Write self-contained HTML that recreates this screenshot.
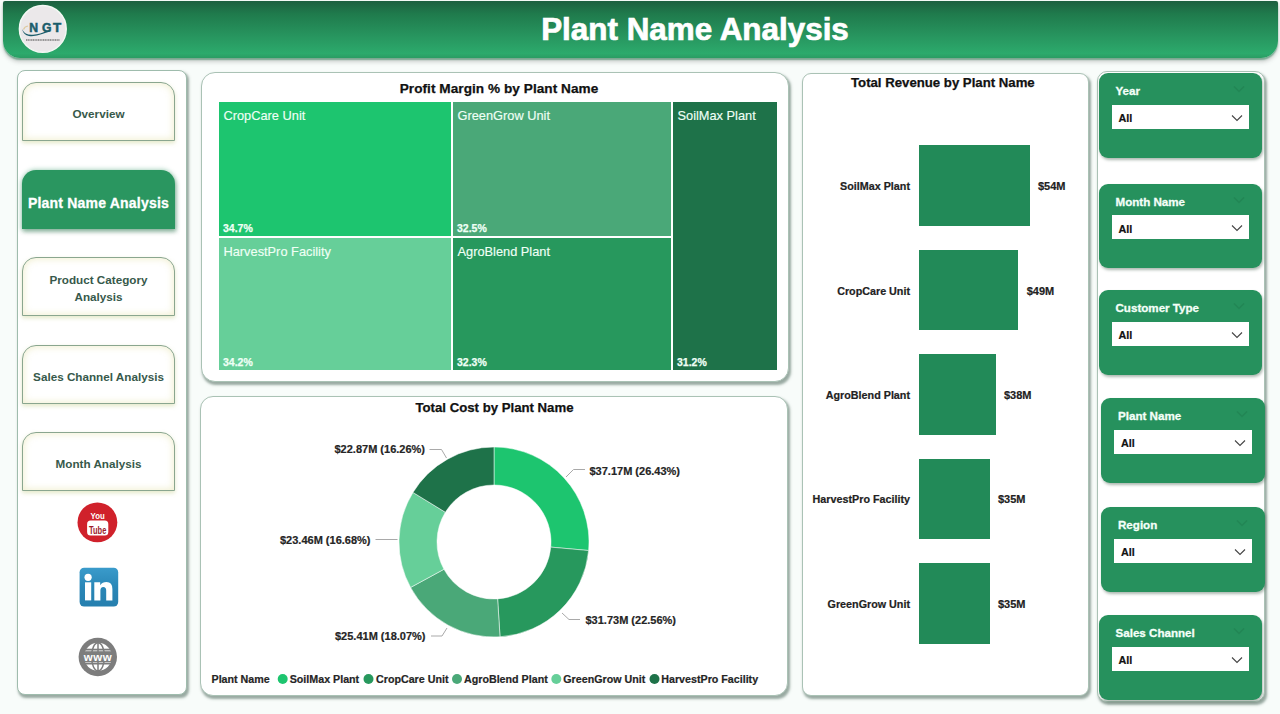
<!DOCTYPE html>
<html><head><meta charset="utf-8">
<style>
*{box-sizing:border-box;margin:0;padding:0}
html,body{width:1280px;height:714px;overflow:hidden;background:#f8fcfa;font-family:"Liberation Sans",sans-serif;position:relative}
.abs{position:absolute}
#hdr{left:3px;top:1px;width:1275px;height:57px;background:linear-gradient(#1c5f40 0%,#1f7a4c 22%,#27945e 60%,#2caa6c 92%,#2a9c63 100%);border-radius:2px 2px 17px 17px;box-shadow:0 1.5px 1.5px rgba(50,130,90,.55),0 4px 4px rgba(100,100,100,.28)}
#title{left:395px;top:11.7px;width:600px;text-align:center;color:#fff;-webkit-text-stroke:.7px #fff;font-weight:bold;font-size:31.4px;line-height:36px}
#logo{left:19px;top:5px;width:48px;height:48px;border-radius:50%;background:#efeeee}
.panel{background:#fff;border:1.2px solid #aac2b5;border-radius:12px;box-shadow:1.5px 2.5px 2.5px rgba(60,90,75,.5)}
#nav{left:17px;top:70px;width:170px;height:625px;border-radius:8px;border:1.3px solid #9fbcad}
.btn{left:22px;width:153px;height:59px;border:1.3px solid #8aa68f;border-radius:14px 14px 0 0;background:#fff;box-shadow:0 2px 4px rgba(215,222,175,.7), inset 0 0 7px 1px rgba(238,236,200,.85);color:#37594b;font-weight:bold;font-size:11.7px;text-align:center;display:flex;align-items:center;justify-content:center;line-height:16.8px;padding-top:5px}
.btn.act{background:#2a9660;border:none;color:#fff;-webkit-text-stroke:.3px #fff;font-size:14px;letter-spacing:.2px;padding-top:8px;box-shadow:0 0 4px 1px rgba(42,150,96,.35),1px 3px 4px rgba(60,110,80,.45)}
#tm{left:201px;top:72px;width:588px;height:310px;border-radius:14px}
#dn{left:199.5px;top:396px;width:588.5px;height:300px;border-radius:13px}
#rv{left:802px;top:73px;width:286.5px;height:622.5px;border-radius:9px}
#sl{left:1097px;top:71px;width:168px;height:631px;border-radius:10px}
.ptitle{-webkit-text-stroke-width:.25px;position:absolute;left:0;right:0;text-align:center;font-weight:bold;font-size:13.6px;color:#111}
.cell{position:absolute;color:#effff5}
.cell .n{-webkit-text-stroke-width:.15px;position:absolute;left:4.5px;top:6.3px;font-size:12.8px;white-space:nowrap}
.cell .v{-webkit-text-stroke-width:.25px;position:absolute;left:4px;bottom:2px;font-size:10.5px;font-weight:bold}
.bar{position:absolute;left:919px;height:80.8px;background:#228a58}
.bl{-webkit-text-stroke-width:.2px;position:absolute;right:370px;font-size:10.75px;font-weight:bold;color:#222;text-align:right;width:120px}
.bv{-webkit-text-stroke-width:.2px;position:absolute;font-size:11px;font-weight:bold;color:#222}
.card{position:absolute;width:163.5px;height:84.5px;background:#26915d;border-radius:9px;box-shadow:1px 2px 3px rgba(50,80,60,.4)}
.card .t{-webkit-text-stroke:.3px #f4fff8;position:absolute;left:17px;top:11px;color:#f4fff8;font-weight:bold;font-size:11.6px;white-space:nowrap}
.card .dd{position:absolute;left:13px;top:31.6px;width:137.5px;height:24px;background:#fff}
.card .dd span{-webkit-text-stroke-width:.2px;position:absolute;left:7px;top:7.5px;font-size:10.8px;font-weight:bold;color:#111}
.card .hc{position:absolute;right:17px;top:12px;opacity:.5}
.card .dd svg{position:absolute;right:6px;top:9px}
.lbl{-webkit-text-stroke-width:.2px;position:absolute;font-size:11px;font-weight:bold;color:#252525;white-space:nowrap}
</style></head><body>
<div id="hdr" class="abs"></div>
<svg class="abs" style="left:0;top:0" width="90" height="60" viewBox="0 0 90 60">
<circle cx="42.8" cy="28.9" r="23.4" fill="#ebe8ea" stroke="#f3f8f4" stroke-width="1.5"/>
<g font-family="Liberation Sans" font-weight="bold" font-size="12.2" fill="#1a5c6a" stroke="#1a5c6a" stroke-width=".5">
<text x="29.3" y="31.6">N</text><text x="41.9" y="31.6">G</text><text x="52.9" y="31.6" transform="translate(52.9 0) scale(1.1 1) translate(-52.9 0)">T</text>
</g>
<path d="M22 29 Q25 35.5 33 34.8 Q41 34 45.5 31.2 Q49 30.8 51.5 31.6 Q47 32.2 43 33.8 Q35 36.8 29 36 Q23.5 35 22 29Z" fill="#1a5c6a"/>
<path d="M23.5 29.5 Q24.5 26.5 28 26" stroke="#d9c08a" stroke-width="1.2" fill="none" opacity=".8"/>
<line x1="26" y1="40" x2="60" y2="40" stroke="#333" stroke-width="1.4" stroke-dasharray="1.2 .5" opacity=".6"/>
</svg>
<div id="title" class="abs">Plant Name Analysis</div>

<div id="nav" class="abs panel"></div>
<div class="abs btn" style="top:82px">Overview</div>
<div class="abs btn act" style="top:170px">Plant Name Analysis</div>
<div class="abs btn" style="top:257px">Product Category<br>Analysis</div>
<div class="abs btn" style="top:345px">Sales Channel Analysis</div>
<div class="abs btn" style="top:432px">Month Analysis</div>
<svg class="abs" style="left:0;top:480px" width="200" height="220" viewBox="0 480 200 220">
<circle cx="97.4" cy="522.4" r="19.9" fill="#d0212b"/>
<text x="97.6" y="518.9" text-anchor="middle" font-family="Liberation Sans" font-weight="bold" font-size="11.5" fill="#fff" transform="translate(97.6 518.9) scale(.68 .85) translate(-97.6 -518.9)">You</text>
<rect x="87.1" y="520.4" width="21.2" height="15" rx="3.5" fill="#fff"/>
<text x="97.7" y="533.6" text-anchor="middle" font-family="Liberation Sans" font-weight="bold" font-size="12.5" fill="#9c1b2a" transform="translate(97.7 533.6) scale(.6 .9) translate(-97.7 -533.6)">Tube</text>
<defs><linearGradient id="lg" x1="0" y1="0" x2="0" y2="1"><stop offset="0" stop-color="#3a9bcb"/><stop offset=".5" stop-color="#2a87b7"/><stop offset="1" stop-color="#267fae"/></linearGradient></defs>
<rect x="79.6" y="567.7" width="38.6" height="38.9" rx="4.5" fill="url(#lg)"/>
<circle cx="88.1" cy="577.3" r="3.6" fill="#fff"/>
<rect x="85" y="582.3" width="6.2" height="18.1" fill="#fff"/>
<path d="M94.3 582.3H100.2V585.2Q102.3 582 106.5 582Q112.4 582 112.4 589V600.4H106.2V590.5Q106.2 587 103.3 587Q100.4 587 100.4 590.5V600.4H94.3Z" fill="#fff"/>
<circle cx="97.8" cy="657" r="19.2" fill="#7d7d7d"/>
<circle cx="98" cy="656.8" r="14" fill="#fff"/>
<g stroke="#7d7d7d" fill="none" stroke-width="1.5">
<ellipse cx="98" cy="656.8" rx="6.5" ry="14"/>
<line x1="98" y1="642.8" x2="98" y2="670.8"/>
<line x1="84" y1="649.6" x2="112" y2="649.6" stroke-width="1.8"/>
<line x1="84" y1="663.6" x2="112" y2="663.6" stroke-width="1.8"/>
</g>
<rect x="83" y="651.2" width="30" height="11" fill="#7d7d7d"/>
<text x="98" y="661" text-anchor="middle" font-family="Liberation Sans" font-weight="bold" font-size="11.5" fill="#fff" letter-spacing=".6" transform="translate(98 661) scale(1 .9) translate(-98 -661)">www</text>
</svg>

<div id="tm" class="abs panel"></div>
<div class="ptitle" style="left:204.5px;width:589px;top:81px;letter-spacing:.05px;font-size:13.6px">Profit Margin % by Plant Name</div>
<div class="cell" style="left:219px;top:102px;width:232px;height:134px;background:#1dc56f"><span class="n">CropCare Unit</span><span class="v">34.7%</span></div>
<div class="cell" style="left:453px;top:102px;width:218px;height:134px;background:#4aa878"><span class="n">GreenGrow Unit</span><span class="v">32.5%</span></div>
<div class="cell" style="left:673px;top:102px;width:104px;height:268px;background:#1e7249"><span class="n">SoilMax Plant</span><span class="v">31.2%</span></div>
<div class="cell" style="left:219px;top:238px;width:232px;height:132px;background:#66cf99"><span class="n">HarvestPro Facility</span><span class="v">34.2%</span></div>
<div class="cell" style="left:453px;top:238px;width:218px;height:132px;background:#27985d"><span class="n">AgroBlend Plant</span><span class="v">32.3%</span></div>

<div id="dn" class="abs panel"></div>
<div class="ptitle" style="left:200px;width:588px;top:400px;font-size:13.2px;padding-left:1px">Total Cost by Plant Name</div>
<svg class="abs" style="left:0;top:0" width="1280" height="714" viewBox="0 0 1280 714">
<g stroke="#fff" stroke-width="0.5">
<path d="M494.00 447.00A95 95 0 0 1 588.62 550.52L550.77 547.11A57 57 0 0 0 494.00 485.00Z" fill="#1dc56f"/>
<path d="M588.62 550.52A95 95 0 0 1 500.02 636.81L497.61 598.89A57 57 0 0 0 550.77 547.11Z" fill="#27985d"/>
<path d="M500.02 636.81A95 95 0 0 1 410.58 587.45L443.95 569.27A57 57 0 0 0 497.61 598.89Z" fill="#4aa878"/>
<path d="M410.58 587.45A95 95 0 0 1 412.97 492.41L445.38 512.25A57 57 0 0 0 443.95 569.27Z" fill="#66cf99"/>
<path d="M412.97 492.41A95 95 0 0 1 494.00 447.00L494.00 485.00A57 57 0 0 0 445.38 512.25Z" fill="#1e7249"/>
</g>
<g stroke="#a9a9a9" stroke-width="1" fill="none">
<polyline points="566,477 573.5,469.5 585,469.5"/>
<polyline points="562,613 569,619.5 580,619.5"/>
<polyline points="447,628 442,636 431,636"/>
<polyline points="397.5,539.5 375.5,539.5"/>
<polyline points="446.5,458 441.5,449.5 429.5,449.5"/>
</g>
<g fill="#1dc56f"><circle cx="282.7" cy="679" r="5"/></g>
<circle cx="368.5" cy="679" r="5" fill="#27985d"/>
<circle cx="457" cy="679" r="5" fill="#4aa878"/>
<circle cx="556.3" cy="679" r="5" fill="#66cf99"/>
<circle cx="654.5" cy="679" r="5" fill="#1e7249"/>
</svg>
<div class="lbl" style="left:589.5px;top:464.8px">$37.17M (26.43%)</div>
<div class="lbl" style="left:585.5px;top:613.7px">$31.73M (22.56%)</div>
<div class="lbl" style="left:335px;top:630.3px">$25.41M (18.07%)</div>
<div class="lbl" style="left:280px;top:533.7px">$23.46M (16.68%)</div>
<div class="lbl" style="left:334.5px;top:442.5px">$22.87M (16.26%)</div>
<div class="lbl" style="left:211.5px;top:672.7px;font-size:10.7px">Plant Name</div>
<div class="lbl" style="left:289.7px;top:672.7px;font-size:10.7px">SoilMax Plant</div>
<div class="lbl" style="left:376px;top:672.7px;font-size:10.7px">CropCare Unit</div>
<div class="lbl" style="left:464px;top:672.7px;font-size:10.7px">AgroBlend Plant</div>
<div class="lbl" style="left:563.3px;top:672.7px;font-size:10.7px">GreenGrow Unit</div>
<div class="lbl" style="left:661.3px;top:672.7px;font-size:10.7px">HarvestPro Facility</div>

<div id="rv" class="abs panel"></div>
<div class="ptitle" style="left:802px;width:287px;top:75px;text-align:left;padding-left:49px;font-size:13.2px">Total Revenue by Plant Name</div>
<div class="bar" style="top:145px;width:111px"></div>
<div class="bar" style="top:249.5px;width:99px"></div>
<div class="bar" style="top:354px;width:77px"></div>
<div class="bar" style="top:458.5px;width:71px"></div>
<div class="bar" style="top:563px;width:71px"></div>
<div class="bl" style="left:790px;top:179.8px">SoilMax Plant</div>
<div class="bl" style="left:790px;top:284.8px">CropCare Unit</div>
<div class="bl" style="left:790px;top:388.8px">AgroBlend Plant</div>
<div class="bl" style="left:790px;top:493.3px">HarvestPro Facility</div>
<div class="bl" style="left:790px;top:597.8px">GreenGrow Unit</div>
<div class="bv" style="left:1038px;top:179.8px">$54M</div>
<div class="bv" style="left:1026.7px;top:284.8px">$49M</div>
<div class="bv" style="left:1004px;top:388.8px">$38M</div>
<div class="bv" style="left:998px;top:493.3px">$35M</div>
<div class="bv" style="left:998px;top:597.8px">$35M</div>

<div id="sl" class="abs panel"></div><div class="card" style="left:1098.5px;top:73px"><span class="t">Year</span><div class="dd"><span>All</span><svg width="12" height="8" viewBox="0 0 12 8"><polyline points="1,1.5 6,6.5 11,1.5" fill="none" stroke="#444" stroke-width="1.1"/></svg></div><svg class="hc" width="12" height="8" viewBox="0 0 12 8"><polyline points="1,1.5 6,6.5 11,1.5" fill="none" stroke="#1f7a4d" stroke-width="1.1"/></svg></div>
<div class="card" style="left:1098.5px;top:183.5px"><span class="t">Month Name</span><div class="dd"><span>All</span><svg width="12" height="8" viewBox="0 0 12 8"><polyline points="1,1.5 6,6.5 11,1.5" fill="none" stroke="#444" stroke-width="1.1"/></svg></div><svg class="hc" width="12" height="8" viewBox="0 0 12 8"><polyline points="1,1.5 6,6.5 11,1.5" fill="none" stroke="#1f7a4d" stroke-width="1.1"/></svg></div>
<div class="card" style="left:1098.5px;top:290px"><span class="t">Customer Type</span><div class="dd"><span>All</span><svg width="12" height="8" viewBox="0 0 12 8"><polyline points="1,1.5 6,6.5 11,1.5" fill="none" stroke="#444" stroke-width="1.1"/></svg></div><svg class="hc" width="12" height="8" viewBox="0 0 12 8"><polyline points="1,1.5 6,6.5 11,1.5" fill="none" stroke="#1f7a4d" stroke-width="1.1"/></svg></div>
<div class="card" style="left:1101px;top:398px"><span class="t">Plant Name</span><div class="dd"><span>All</span><svg width="12" height="8" viewBox="0 0 12 8"><polyline points="1,1.5 6,6.5 11,1.5" fill="none" stroke="#444" stroke-width="1.1"/></svg></div><svg class="hc" width="12" height="8" viewBox="0 0 12 8"><polyline points="1,1.5 6,6.5 11,1.5" fill="none" stroke="#1f7a4d" stroke-width="1.1"/></svg></div>
<div class="card" style="left:1101px;top:507px"><span class="t">Region</span><div class="dd"><span>All</span><svg width="12" height="8" viewBox="0 0 12 8"><polyline points="1,1.5 6,6.5 11,1.5" fill="none" stroke="#444" stroke-width="1.1"/></svg></div><svg class="hc" width="12" height="8" viewBox="0 0 12 8"><polyline points="1,1.5 6,6.5 11,1.5" fill="none" stroke="#1f7a4d" stroke-width="1.1"/></svg></div>
<div class="card" style="left:1098.5px;top:615.2px"><span class="t">Sales Channel</span><div class="dd"><span>All</span><svg width="12" height="8" viewBox="0 0 12 8"><polyline points="1,1.5 6,6.5 11,1.5" fill="none" stroke="#444" stroke-width="1.1"/></svg></div><svg class="hc" width="12" height="8" viewBox="0 0 12 8"><polyline points="1,1.5 6,6.5 11,1.5" fill="none" stroke="#1f7a4d" stroke-width="1.1"/></svg></div>

</body></html>
